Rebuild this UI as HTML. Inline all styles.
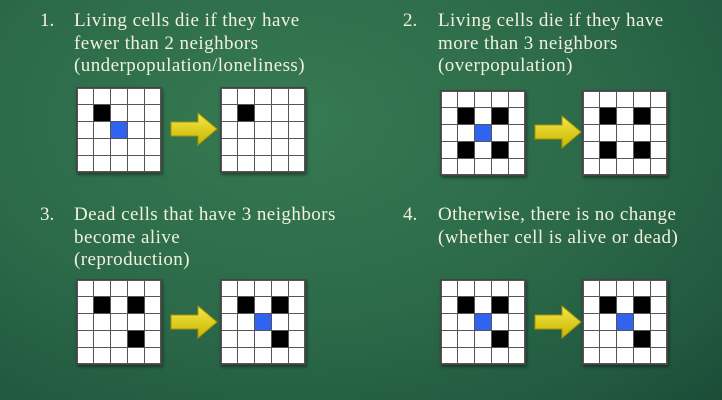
<!DOCTYPE html>
<html><head><style>
body{margin:0;width:722px;height:400px;overflow:hidden;position:relative;
background:radial-gradient(ellipse at 40% 30%,#367a52 0%,#2c6a49 50%,#21583f 85%,#1b4c37 100%);
font-family:"Liberation Serif",serif;color:#f2f2dc;}
.t{position:absolute;font-size:19px;line-height:22.6px;letter-spacing:0.45px;}
.n{position:absolute;font-size:19px;line-height:22.6px;}
.g{position:absolute;width:86px;height:86px;display:grid;grid-template-columns:repeat(5,1fr);grid-template-rows:repeat(5,1fr);background:#fff;border:1px solid #444;box-sizing:border-box;box-shadow:1px 2px 3px rgba(0,0,0,.4)}
.g i{border:1px solid #555;background:#fff;margin:-0.5px}
.g i.b{background:#000}.g i.u{background:#2f63f0}
.a{position:absolute;width:48px;height:34px}
</style></head><body>
<div class="n" style="left:40px;top:10px">1.</div>
<div class="t" style="left:74px;top:10px">Living cells die if they have<br>fewer than 2 neighbors<br>(underpopulation/loneliness)</div>
<div class="n" style="left:403px;top:10px">2.</div>
<div class="t" style="left:438px;top:10px">Living cells die if they have<br>more than 3 neighbors<br>(overpopulation)</div>
<div class="n" style="left:40px;top:204px">3.</div>
<div class="t" style="left:74px;top:204px">Dead cells that have 3 neighbors<br>become alive<br>(reproduction)</div>
<div class="n" style="left:403px;top:204px">4.</div>
<div class="t" style="left:438px;top:204px">Otherwise, there is no change<br>(whether cell is alive or dead)</div>

<svg width="0" height="0" style="position:absolute"><defs><linearGradient id="y" x1="0" y1="0" x2="0" y2="1"><stop offset="0" stop-color="#f4e84a"/><stop offset="1" stop-color="#c9b400"/></linearGradient></defs></svg>

<div class="g" style="left:76px;top:87px"><i></i><i></i><i></i><i></i><i></i><i></i><i class="b"></i><i></i><i></i><i></i><i></i><i></i><i class="u"></i><i></i><i></i><i></i><i></i><i></i><i></i><i></i><i></i><i></i><i></i><i></i><i></i></div>
<svg class="a" style="left:170px;top:112px" viewBox="0 0 48 34"><path d="M1 10H28V1L47 17L28 33V24H1Z" fill="url(#y)" stroke="#a89400" stroke-width="1"/></svg>
<div class="g" style="left:220px;top:87px"><i></i><i></i><i></i><i></i><i></i><i></i><i class="b"></i><i></i><i></i><i></i><i></i><i></i><i></i><i></i><i></i><i></i><i></i><i></i><i></i><i></i><i></i><i></i><i></i><i></i><i></i></div>

<div class="g" style="left:440px;top:90px"><i></i><i></i><i></i><i></i><i></i><i></i><i class="b"></i><i></i><i class="b"></i><i></i><i></i><i></i><i class="u"></i><i></i><i></i><i></i><i class="b"></i><i></i><i class="b"></i><i></i><i></i><i></i><i></i><i></i><i></i></div>
<svg class="a" style="left:534px;top:115px" viewBox="0 0 48 34"><path d="M1 10H28V1L47 17L28 33V24H1Z" fill="url(#y)" stroke="#a89400" stroke-width="1"/></svg>
<div class="g" style="left:582px;top:90px"><i></i><i></i><i></i><i></i><i></i><i></i><i class="b"></i><i></i><i class="b"></i><i></i><i></i><i></i><i></i><i></i><i></i><i></i><i class="b"></i><i></i><i class="b"></i><i></i><i></i><i></i><i></i><i></i><i></i></div>

<div class="g" style="left:76px;top:279px"><i></i><i></i><i></i><i></i><i></i><i></i><i class="b"></i><i></i><i class="b"></i><i></i><i></i><i></i><i></i><i></i><i></i><i></i><i></i><i></i><i class="b"></i><i></i><i></i><i></i><i></i><i></i><i></i></div>
<svg class="a" style="left:170px;top:305px" viewBox="0 0 48 34"><path d="M1 10H28V1L47 17L28 33V24H1Z" fill="url(#y)" stroke="#a89400" stroke-width="1"/></svg>
<div class="g" style="left:220px;top:279px"><i></i><i></i><i></i><i></i><i></i><i></i><i class="b"></i><i></i><i class="b"></i><i></i><i></i><i></i><i class="u"></i><i></i><i></i><i></i><i></i><i></i><i class="b"></i><i></i><i></i><i></i><i></i><i></i><i></i></div>

<div class="g" style="left:440px;top:279px"><i></i><i></i><i></i><i></i><i></i><i></i><i class="b"></i><i></i><i class="b"></i><i></i><i></i><i></i><i class="u"></i><i></i><i></i><i></i><i></i><i></i><i class="b"></i><i></i><i></i><i></i><i></i><i></i><i></i></div>
<svg class="a" style="left:534px;top:305px" viewBox="0 0 48 34"><path d="M1 10H28V1L47 17L28 33V24H1Z" fill="url(#y)" stroke="#a89400" stroke-width="1"/></svg>
<div class="g" style="left:582px;top:279px"><i></i><i></i><i></i><i></i><i></i><i></i><i class="b"></i><i></i><i class="b"></i><i></i><i></i><i></i><i class="u"></i><i></i><i></i><i></i><i></i><i></i><i class="b"></i><i></i><i></i><i></i><i></i><i></i><i></i></div>
</body></html>
